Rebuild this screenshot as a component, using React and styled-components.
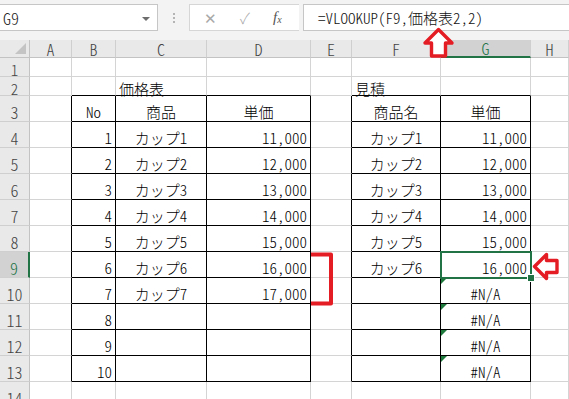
import React from "react";
import styled, { createGlobalStyle, css } from "styled-components";

const GlobalStyle = createGlobalStyle`
  html, body {
    margin: 0;
    padding: 0;
    background: #ffffff;
  }
  body {
    font-family: "Noto Sans CJK JP", "Noto Sans", sans-serif;
    color: #000;
  }
`;

const GREEN = "#217346";
const RED = "#e41c24";
const FONT = `"Noto Sans CJK JP", "Noto Sans", sans-serif`;

const COLS = [
  { key: "A", w: 42 },
  { key: "B", w: 44 },
  { key: "C", w: 91 },
  { key: "D", w: 104 },
  { key: "E", w: 41 },
  { key: "F", w: 89 },
  { key: "G", w: 90 },
  { key: "H", w: 38 },
];

const ROWS = [1, 2, 3, 4, 5, 6, 7, 8, 9, 10, 11, 12, 13, 14];
const rowHeight = (r) => (r <= 2 ? 19 : 26);

const TABLES = [
  { c0: 1, c1: 3, r0: 3, r1: 13 },
  { c0: 5, c1: 6, r0: 3, r1: 13 },
];

const inTable = (r, c) =>
  TABLES.some((t) => r >= t.r0 && r <= t.r1 && c >= t.c0 && c <= t.c1);

const prices = ["11,000", "12,000", "13,000", "14,000", "15,000", "16,000", "17,000"];

function cellData(r, key) {
  if (r === 2 && key === "C") return { text: "価格表", align: "left" };
  if (r === 2 && key === "F") return { text: "見積", align: "left" };
  if (r === 3) {
    const head = { B: "No", C: "商品", D: "単価", F: "商品名", G: "単価" };
    if (head[key]) return { text: head[key], align: "center" };
  }
  if (r >= 4 && r <= 13) {
    const i = r - 3;
    if (key === "B") return { text: String(i), align: "right" };
    if (i <= 7 && key === "C") return { text: `カップ${i}`, align: "center" };
    if (i <= 7 && key === "D") return { text: prices[i - 1], align: "right" };
    if (i <= 6 && key === "F") return { text: `カップ${i}`, align: "center" };
    if (i <= 6 && key === "G") return { text: prices[i - 1], align: "right" };
    if (i >= 7 && key === "G") return { text: "#N/A", align: "center", error: true };
  }
  return null;
}

function App() {
  return (
    <>
      <GlobalStyle />
      <Page>
        <FormulaBar>
          <NameBox>
            <NameText>G9</NameText>
            <DropArrow />
          </NameBox>
          <Dots>
            <Dot />
            <Dot />
            <Dot />
          </Dots>
          <FuncBox>
            <FuncIcon>✕</FuncIcon>
            <FuncIcon>✓</FuncIcon>
            <FxIcon>
              f<sub>x</sub>
            </FxIcon>
          </FuncBox>
          <FormulaBox>=VLOOKUP(F9,価格表2,2)</FormulaBox>
        </FormulaBar>

        <Sheet>
          <Corner />
          {COLS.map((c) => (
            <ColHead key={c.key} $active={c.key === "G"}>
              {c.key}
            </ColHead>
          ))}
          {ROWS.map((r) => (
            <React.Fragment key={r}>
              <RowHead $short={r <= 2} $active={r === 9}>
                {r}
              </RowHead>
              {COLS.map((c, ci) => {
                const d = cellData(r, c.key);
                return (
                  <Cell
                    key={c.key}
                    $short={r <= 2}
                    $align={d ? d.align : "left"}
                    $right={inTable(r, ci) || inTable(r, ci + 1)}
                    $bottom={inTable(r, ci) || inTable(r + 1, ci)}
                    $error={d && d.error}
                  >
                    {d ? d.text : ""}
                  </Cell>
                );
              })}
            </React.Fragment>
          ))}
        </Sheet>

        <Selection>
          <FillHandle />
        </Selection>

        <Marks viewBox="0 0 569 399" width="569" height="399">
          <polygon
            points="438.5,29.5 452,43 445.5,43 445.5,56 431.5,56 431.5,43 425,43"
            fill="#ffffff"
            stroke={RED}
            strokeWidth="3.4"
            strokeLinejoin="round"
          />
          <polygon
            points="534.5,266.5 546.5,254.5 546.5,260.5 557,260.5 557,272.5 546.5,272.5 546.5,278.5"
            fill="#ffffff"
            stroke={RED}
            strokeWidth="3.4"
            strokeLinejoin="round"
          />
          <path
            d="M311 254.5 H331 V303.5 H311"
            fill="none"
            stroke={RED}
            strokeWidth="4"
            strokeLinejoin="round"
          />
        </Marks>
      </Page>
    </>
  );
}

export default App;

const Page = styled.div`
  position: relative;
  width: 569px;
  height: 399px;
  overflow: hidden;
  background: #ffffff;
`;

const FormulaBar = styled.div`
  height: 40px;
  box-sizing: border-box;
  padding-top: 4px;
  background: #f3f3f3;
  display: flex;
  align-items: flex-start;
  font-family: ${FONT};
  font-weight: 300;
  font-feature-settings: "hwid";
`;

const NameBox = styled.div`
  width: 158px;
  height: 27px;
  box-sizing: border-box;
  background: #fff;
  border: 1px solid #c6c6c6;
  border-left: none;
  display: flex;
  align-items: center;
  justify-content: space-between;
  padding: 0 7px 0 3px;
`;

const NameText = styled.span`
  font-size: 16px;
  color: #222;
`;

const DropArrow = styled.span`
  width: 0;
  height: 0;
  border-left: 4px solid transparent;
  border-right: 4px solid transparent;
  border-top: 4px solid #6d6d6d;
  margin-top: 2px;
`;

const Dots = styled.div`
  width: 31px;
  height: 27px;
  display: flex;
  flex-direction: column;
  align-items: center;
  justify-content: center;
  gap: 2px;
`;

const Dot = styled.span`
  width: 2px;
  height: 2px;
  background: #b4b4b4;
`;

const FuncBox = styled.div`
  width: 110px;
  height: 27px;
  box-sizing: border-box;
  background: #fff;
  border: 1px solid #d6d6d6;
  border-right: none;
  display: flex;
  align-items: center;
  padding-left: 13px;
  gap: 21px;
`;

const FuncIcon = styled.span`
  font-size: 15px;
  color: #a8a8a8;
  width: 14px;
  text-align: center;
`;

const FxIcon = styled.span`
  font-family: "Liberation Serif", serif;
  font-style: italic;
  font-size: 15px;
  color: #555;
  sub {
    font-size: 10px;
    vertical-align: -1px;
  }
`;

const FormulaBox = styled.div`
  flex: 1;
  height: 27px;
  box-sizing: border-box;
  margin-left: 4px;
  background: #fff;
  border: 1px solid #c6c6c6;
  border-right: none;
  display: flex;
  align-items: center;
  padding-left: 14px;
  font-size: 15px;
  color: #111;
  white-space: nowrap;
`;

const Sheet = styled.div`
  display: grid;
  grid-template-columns: 30px ${COLS.map((c) => `${c.w}px`).join(" ")};
  grid-template-rows: 18px ${ROWS.map((r) => `${rowHeight(r)}px`).join(" ")};
  font-family: ${FONT};
  font-size: 15px;
  font-weight: 300;
  font-feature-settings: "hwid";
`;

const Corner = styled.div`
  position: relative;
  background: #e9e9e9;
  border-right: 1px solid #c3c3c3;
  border-bottom: 1px solid #c3c3c3;
  &::after {
    content: "";
    position: absolute;
    right: 3px;
    bottom: 3px;
    width: 0;
    height: 0;
    border-left: 11px solid transparent;
    border-bottom: 11px solid #c4c4c4;
  }
`;

const ColHead = styled.div`
  background: #e9e9e9;
  border-right: 1px solid #cfcfcf;
  border-bottom: 1px solid #c3c3c3;
  color: #444;
  font-size: 16px;
  display: flex;
  align-items: center;
  justify-content: center;
  line-height: 16px;
  ${({ $active }) =>
    $active &&
    css`
      background: #d2d2d2;
      color: ${GREEN};
      border-bottom: 2px solid ${GREEN};
    `}
`;

const RowHead = styled.div`
  background: #e9e9e9;
  border-right: 1px solid #c3c3c3;
  border-bottom: 1px solid #cfcfcf;
  color: #444;
  font-size: ${({ $short }) => ($short ? "15px" : "16px")};
  display: flex;
  align-items: flex-end;
  justify-content: center;
  line-height: ${({ $short }) => ($short ? "12px" : "17px")};
  ${({ $active }) =>
    $active &&
    css`
      background: #d2d2d2;
      color: ${GREEN};
      border-right: 2px solid ${GREEN};
    `}
`;

const Cell = styled.div`
  position: relative;
  box-sizing: border-box;
  border-right: 1px solid ${({ $right }) => ($right ? "#000" : "#d4d4d4")};
  border-bottom: 1px solid ${({ $bottom }) => ($bottom ? "#000" : "#d4d4d4")};
  display: flex;
  align-items: flex-end;
  justify-content: ${({ $align }) =>
    $align === "right" ? "flex-end" : $align === "center" ? "center" : "flex-start"};
  padding: 0 3px;
  line-height: ${({ $short }) => ($short ? "12px" : "18px")};
  white-space: nowrap;
  color: #000;
  ${({ $error }) =>
    $error &&
    css`
      &::before {
        content: "";
        position: absolute;
        left: 0;
        top: 0;
        width: 0;
        height: 0;
        border-top: 6px solid #1e7a3c;
        border-right: 6px solid transparent;
      }
    `}
`;

const Selection = styled.div`
  position: absolute;
  left: 440px;
  top: 251px;
  width: 92px;
  height: 28px;
  box-sizing: border-box;
  border: 2px solid ${GREEN};
  pointer-events: none;
`;

const FillHandle = styled.div`
  position: absolute;
  right: -5px;
  bottom: -5px;
  width: 6px;
  height: 6px;
  background: ${GREEN};
  border: 1px solid #fff;
`;

const Marks = styled.svg`
  position: absolute;
  left: 0;
  top: 0;
  pointer-events: none;
`;
